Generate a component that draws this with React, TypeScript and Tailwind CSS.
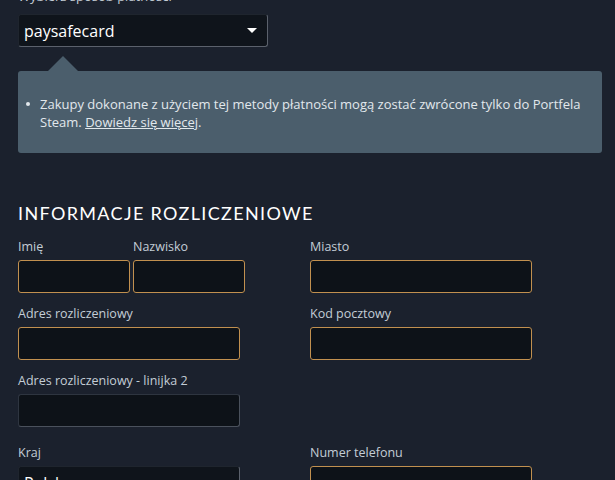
import React from "react";

const font = { fontFamily: '"Open Sans", "Noto Sans", Arial, sans-serif' };

function Label({ children }: { children: React.ReactNode }) {
  return <div className="text-[12.5px] leading-[14px] mb-[6px] text-[#c3cdd6] whitespace-nowrap">{children}</div>;
}

function Input({ w, plain }: { w: string; plain?: boolean }) {
  return (
    <div
      className={
        "h-[33px] rounded-[3px] bg-[#0d1218] border " +
        (plain ? "border-[#2e3540] border-b-[#4a515c] border-r-[#4a515c] " : "border-[#c1904f] ") +
        w
      }
    />
  );
}

export default function App() {
  return (
    <div className="w-[615px] h-[480px] overflow-hidden bg-[#1b212d]" style={font}>
      <div className="pl-[18px] -mt-[14px]">
        <div className="text-[13px] leading-[20px] text-[#c3cdd6]">Wybierz sposób płatności</div>
        <div className="mt-[8px] w-[250px] h-[33px] rounded-[3px] bg-[#0f141b] border border-[#1f252e] border-r-[#5b616c] border-b-[#5b616c] flex items-center justify-between pl-[5px] pr-[10px]">
          <span className="text-[16px] text-white">paysafecard</span>
          <svg width="10" height="6" viewBox="0 0 10 6">
            <polygon points="0,0 10,0 5,5" fill="#ffffff" />
          </svg>
        </div>
      </div>

      <div className="pl-[18px] pr-[13px] mt-[9px]">
        <div className="pl-[30px]">
          <div className="w-0 h-0 border-l-[15px] border-r-[15px] border-b-[15px] border-l-transparent border-r-transparent border-b-[#4b5e6c]" />
        </div>
        <div className="bg-[#4b5e6c] rounded-[3px] h-[82px] pt-[24px] pl-[8px] pr-[6px]">
          <div className="flex text-[13px] leading-[18px] text-[#e2e8ec]">
            <span className="w-[4px] h-[4px] rounded-full bg-[#e2e8ec] mt-[7px] mr-[10px] shrink-0" />
            <span className="whitespace-nowrap">
              Zakupy dokonane z użyciem tej metody płatności mogą zostać zwrócone tylko do Portfela
              <br />
              Steam. <span className="underline">Dowiedz się więcej</span>.
            </span>
          </div>
        </div>
      </div>

      <div className="pl-[18px] mt-[49px]">
        <div className="text-[18px] leading-[22px] tracking-[1.35px] text-white" style={{ fontFamily: '"Lato", "Open Sans", sans-serif' }}>
          INFORMACJE ROZLICZENIOWE
        </div>

        <div className="flex mt-[16px]">
          <div className="w-[292px] flex flex-col">
            <div className="flex gap-[3px]">
              <div>
                <Label>Imię</Label>
                <Input w="w-[112px]" />
              </div>
              <div>
                <Label>Nazwisko</Label>
                <Input w="w-[112px]" />
              </div>
            </div>
            <div className="mt-[14px]">
              <Label>Adres rozliczeniowy</Label>
              <Input w="w-[222px]" />
            </div>
            <div className="mt-[14px]">
              <Label>Adres rozliczeniowy - linijka 2</Label>
              <Input w="w-[222px]" plain />
            </div>
            <div className="mt-[19px]">
              <Label>Kraj</Label>
              <div className="w-[222px] h-[33px] rounded-[3px] bg-[#0f141b] border border-[#1f252e] border-r-[#5b616c] border-b-[#5b616c] flex items-center pl-[5px]">
                <span className="text-[16px] text-white">Polska</span>
              </div>
            </div>
          </div>
          <div className="w-[222px] flex flex-col">
            <div>
              <Label>Miasto</Label>
              <Input w="w-[222px]" />
            </div>
            <div className="mt-[14px]">
              <Label>Kod pocztowy</Label>
              <Input w="w-[222px]" />
            </div>
            <div className="mt-[86px]">
              <Label>Numer telefonu</Label>
              <Input w="w-[222px]" />
            </div>
          </div>
        </div>
      </div>
    </div>
  );
}
